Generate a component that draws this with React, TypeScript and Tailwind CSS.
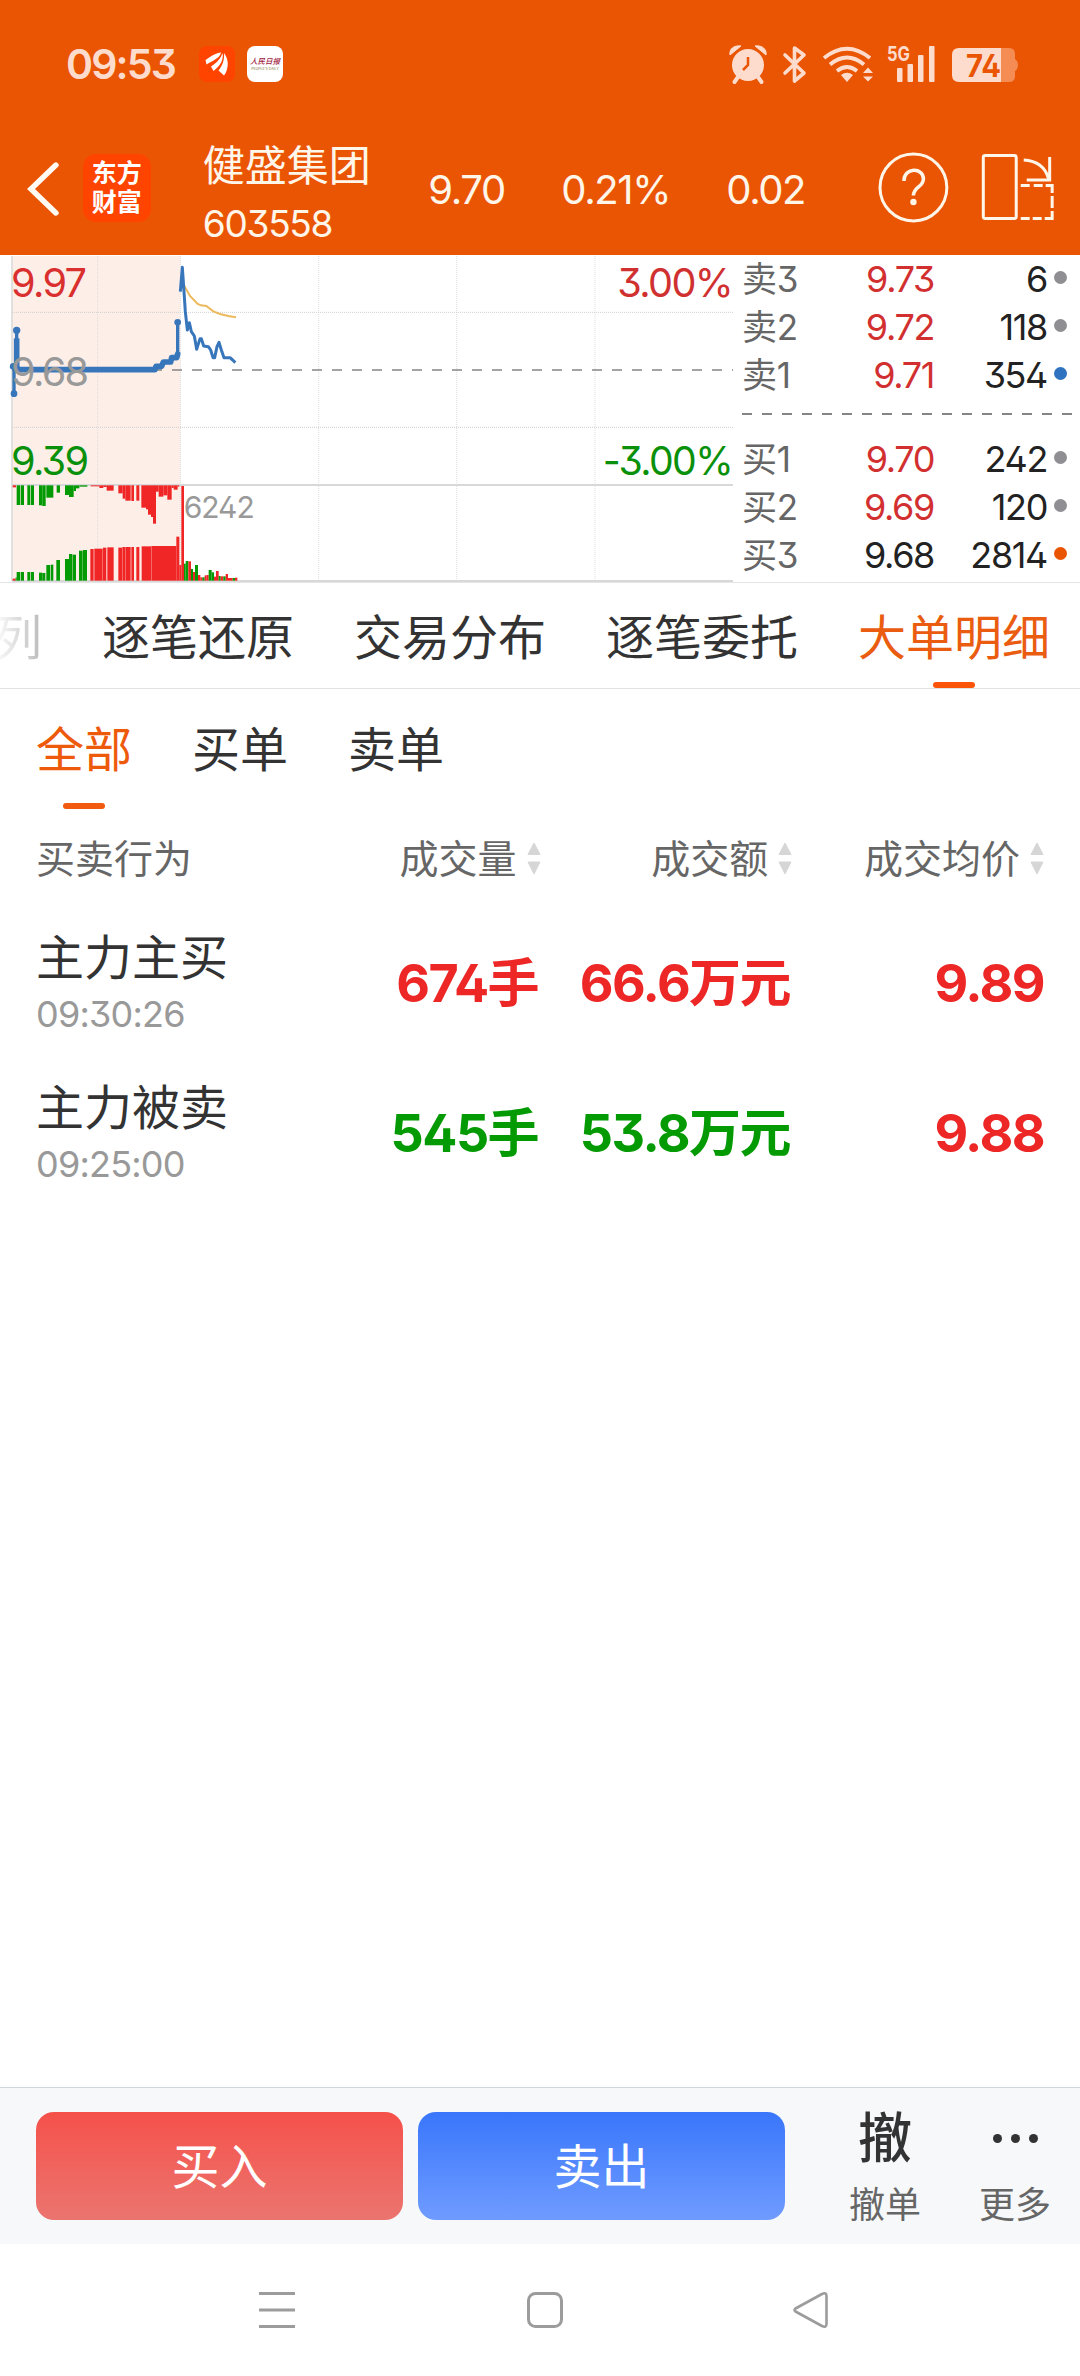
import clsx from "clsx";

type Bar = [x: number, end: number, y: number, color: "r" | "g"];

const RED = "#f02626";
const GREEN = "#049a04";
const BLUE = "#3876bb";

const TABS = ["逐笔还原", "交易分布", "逐笔委托", "大单明细"];
const FILTERS = ["全部", "买单", "卖单"];

const SELLS = [
  { label: "卖3", price: "9.73", volume: "6", dot: "bg-[#8e8e93]" },
  { label: "卖2", price: "9.72", volume: "118", dot: "bg-[#8e8e93]" },
  { label: "卖1", price: "9.71", volume: "354", dot: "bg-[#2e72c0]" },
];

const BUYS = [
  { label: "买1", price: "9.70", volume: "242", dot: "bg-[#8e8e93]" },
  { label: "买2", price: "9.69", volume: "120", dot: "bg-[#8e8e93]" },
  { label: "买3", price: "9.68", volume: "2814", dot: "bg-[#ea5504]" },
];

const ORDERS = [
  { name: "主力主买", time: "09:30:26", volume: "674手", amount: "66.6万元", price: "9.89", up: true },
  { name: "主力被卖", time: "09:25:00", volume: "545手", amount: "53.8万元", price: "9.88", up: false },
];

// unmatched auction volume, hangs from the top of the volume pane
const HANGING: Bar[] = [
  [38, 48, 712, "r"], [50, 60, 765, "g"], [62, 72, 765, "g"], [82, 91, 765, "g"], [93, 102, 765, "g"],
  [117, 127, 766, "g"], [127, 137, 768, "g"], [139, 160, 743, "g"], [170, 180, 728, "g"], [195, 207, 735, "g"],
  [207, 221, 741, "g"], [221, 228, 723, "g"], [228, 238, 715, "g"], [238, 262, 710, "g"],
  [272, 298, 709, "r"], [298, 310, 714, "r"], [310, 320, 711, "r"], [320, 341, 722, "r"], [355, 368, 730, "r"],
  [368, 376, 746, "r"], [376, 392, 752, "r"], [394, 402, 753, "r"], [409, 418, 752, "r"], [424, 438, 773, "r"],
  [438, 444, 778, "r"], [444, 453, 794, "r"], [453, 459, 801, "r"], [459, 468, 821, "r"], [468, 476, 725, "r"],
  [476, 490, 740, "r"], [490, 502, 736, "r"], [502, 515, 749, "r"], [515, 521, 714, "r"], [521, 533, 719, "r"],
  [533, 538, 710, "r"],
];

const RISING: Bar[] = [
  [38, 47, 986, "r"], [47, 50, 982, "g"], [50, 60, 966, "g"], [62, 72, 966, "g"], [82, 91, 966, "g"],
  [93, 102, 966, "g"], [117, 127, 968, "g"], [127, 136, 969, "g"], [139, 150, 945, "g"], [152, 160, 944, "g"],
  [169, 180, 930, "g"], [195, 207, 927, "g"], [207, 217, 912, "g"], [218, 228, 914, "g"], [237, 248, 902, "g"],
  [249, 261, 900, "g"], [271, 281, 897, "r"], [283, 308, 896, "r"], [309, 319, 893, "r"], [322, 341, 892, "r"],
  [355, 366, 893, "r"], [367, 377, 891, "r"], [378, 392, 891, "r"], [394, 402, 891, "r"], [409, 418, 891, "r"],
  [425, 453, 889, "r"], [454, 529, 888, "r"], [529, 538, 860, "r"], [538, 544, 945, "r"], [544, 552, 708, "r"],
  [552, 557, 941, "g"], [557, 565, 933, "g"], [565, 573, 934, "r"], [573, 579, 957, "g"], [579, 585, 966, "r"],
  [585, 594, 945, "g"], [594, 601, 975, "r"], [601, 607, 982, "r"], [607, 614, 982, "g"], [614, 620, 976, "r"],
  [620, 626, 975, "r"], [626, 635, 960, "g"], [635, 642, 967, "g"], [642, 648, 980, "r"], [648, 656, 963, "r"],
  [656, 662, 978, "g"], [662, 670, 979, "r"], [670, 677, 979, "g"], [677, 684, 972, "r"], [684, 698, 984, "r"],
  [698, 705, 984, "g"], [705, 712, 983, "r"],
];

function StatusIcons() {
  return (
    <svg viewBox="724 40 300 48" className="h-12 w-[300px]" fill="#fddccd" stroke="#fddccd" strokeWidth="0">
      <circle cx="748" cy="65" r="16" />
      <path d="M730 55C729 49 734 45 741 46ZM766 55C767 49 762 45 755 46Z" strokeWidth="1" strokeLinejoin="round" />
      <path d="M738 77l-3.500 5M758 77l3.500 5" strokeWidth="4" strokeLinecap="round" />
      <path d="M748 57v8l-5 5" fill="none" stroke="#ea5504" strokeWidth="2.500" />
      <path d="M785 55l19 18-9.500 8V48l9.500 7-19 18" fill="none" strokeWidth="3.600" strokeLinecap="round" strokeLinejoin="round" />
      <g fill="none" strokeWidth="3.800">
        <path d="M824 58q23-18.500 46 0" />
        <path d="M830 64.500q17-14 34 0" />
        <path d="M837 71q10-8 20 0" />
      </g>
      <path d="M841 75q6-4.500 12 0l-6 7zM868 67.500l5 5.500h-10zM868 81.500l5-5h-10z" />
      <text x="887" y="61" fontSize="20" fontWeight="700" textLength="23" lengthAdjust="spacingAndGlyphs">5G</text>
      <rect x="897" y="68" width="5.500" height="14" rx="1" />
      <rect x="907.500" y="64" width="5.500" height="18" rx="1" />
      <rect x="918" y="55" width="5.500" height="27" rx="1" />
      <rect x="929" y="46" width="5.500" height="36" rx="1" />
      <path d="M1001 48h8q6 0 6 6v5q3 2 3 6t-3 6v5q0 6-6 6h-8z" fill="#f48c54" />
      <path d="M959 48h42v34h-42q-7 0-7-7v-20q0-7 7-7z" />
      <text x="966" y="77" fontSize="31" fontWeight="700" fill="#ea5504" textLength="35" lengthAdjust="spacingAndGlyphs">74</text>
    </svg>
  );
}

function Header() {
  return (
    <header className="h-[255px] bg-[#ea5504] text-[#fff6ea]">
      <div className="flex h-32 items-center pl-[65px] pr-14">
        <span className="w-[134px] pl-px text-[41px] font-semibold leading-none tracking-[-0.045em] text-[#fddccd]">09:53</span>
        <svg viewBox="0 0 36 36" className="mr-3 size-9">
          <rect width="36" height="36" rx="8" fill="#ff4400" />
          <path
            d="M6.500 14C13 9.500 17 7 22 6.500C21 12 14 14.500 7.500 18.500ZM12 20.500C18 17 22 12 23.500 7C25 14 21 20 14.500 25ZM19.500 24.500C24 19 25.500 13 25 7C30 13 30 23 25 29.500Z"
            fill="#fff"
          />
        </svg>
        <div className="flex size-9 flex-col items-center justify-center rounded-lg bg-white leading-none">
          <span className="text-[7.500px] font-medium italic leading-[11px] text-[#a02040]">人民日报</span>
          <span className="text-[3.500px] leading-[5px] text-[#8a7a50]">PEOPLE'S DAILY</span>
        </div>
        <div className="ml-auto">
          <StatusIcons />
        </div>
      </div>

      <div className="flex h-[127px] items-center pl-[25px] pr-6">
        <svg viewBox="0 0 36 58" className="mt-[-6px] h-[58px] w-9" fill="none" stroke="#fffaf2" strokeWidth="5.500" strokeLinecap="round">
          <path d="M31 5L6 29L31 53" />
        </svg>
        <div className="ml-[22px] mt-[-7px] flex size-[68px] flex-col items-center justify-center rounded-[13px] bg-[#ff4400] text-[25px] font-bold leading-[29px] text-white">
          <span>东方</span>
          <span>财富</span>
        </div>
        <div className="ml-[52px] mt-1.5 w-[226px]">
          <div className="text-[42px] leading-[58px]">健盛集团</div>
          <div className="text-[37px] leading-[58px] tracking-[-0.035em]">603558</div>
        </div>
        <div className="mt-[-4px] flex text-[40px] tracking-[-0.035em]">
          <span className="w-[133px]">9.70</span>
          <span className="w-[165px]">0.21%</span>
          <span className="w-[152px]">0.02</span>
        </div>
        <svg viewBox="878 152 178 72" className="mt-[-7px] h-[72px] w-[178px]" fill="none" stroke="#fff6ea" strokeWidth="3">
          <circle cx="913.500" cy="187.500" r="33.500" />
          <path d="M904 181C904 167 923.500 167 923.500 179C923.500 187 913.500 187 913.500 195.500" strokeWidth="3.500" />
          <circle cx="913.500" cy="202" r="1.700" />
          <rect x="983.500" y="155.500" width="33" height="63" rx="2" />
          <path d="M1024 160Q1044 161 1049 179M1050 157V180H1027" />
          <path d="M1021 185.500H1030M1034 185.500H1043M1046 185.500H1052.500V193M1052.500 196V208M1052.500 211V218.500H1045M1042 218.500H1033M1030 218.500H1021" />
        </svg>
      </div>
    </header>
  );
}

function Bars({ data, hanging }: { data: Bar[]; hanging?: boolean }) {
  return (
    <>
      {data.map(([x, end, y, color]) => (
        <rect
          key={x}
          x={x}
          y={hanging ? 706 : y}
          width={end - x}
          height={hanging ? y - 706 : 992 - y}
          fill={color === "r" ? RED : GREEN}
        />
      ))}
    </>
  );
}

function PriceChart() {
  return (
    <svg viewBox="0 15 2202 981" className="h-[327px] w-[734px] shrink-0" fill="none">
      <rect x="36" y="18" width="505" height="975" fill="#fdeee7" />
      <path d="M36 18V993" stroke="#dcdcdc" strokeWidth="5" />
      <path d="M293 18V993M541 18V993M956 18V993M1370 18V993M1785 18V993" stroke="#dedede" strokeWidth="3" strokeDasharray="3 3" />
      <path d="M36 187H2199M36 532H2199" stroke="#cfcfcf" strokeWidth="3" strokeDasharray="3 3" />
      <path d="M36 360H2199" stroke="#858585" strokeWidth="5" strokeDasharray="30 30" />
      <path d="M36 705H2199M36 993H2199" stroke="#d8d8d8" strokeWidth="6" />

      <Bars data={HANGING} hanging />
      <Bars data={RISING} />

      <path d="M553 108L570 138L593 162L603 166L619 168L640 184L660 192L685 198L708 202" stroke="#ecba5c" strokeWidth="6" />
      <g stroke={BLUE} strokeLinejoin="round">
        <path d="M541 125L547 52L551 110L556 185L562 240L568 218L574 245L583 258L590 298L600 266H604L611 288L625 290L632 300L639 323H644L651 290L657 277L664 300L672 323H690L698 330L706 338" strokeWidth="9" />
        <path d="M42 432V350M50 240V350M533 217V312" strokeWidth="10" />
        <path d="M38 350L60 359H465L468 349H485L490 336H512L515 323H530L533 312" strokeWidth="17" strokeLinecap="round" />
        <path d="M50 265V355" strokeWidth="17" />
      </g>
      <g fill={BLUE}>
        <circle cx="40" cy="349" r="10" />
        <circle cx="50" cy="241" r="11" />
        <circle cx="42" cy="431" r="10" />
        <circle cx="533" cy="217" r="10" />
      </g>

      <g fontSize="119" letterSpacing="-5">
        <text x="33" y="140" fill="#d92f2f">9.97</text>
        <text x="33" y="407" fill="#999">9.68</text>
        <text x="33" y="674" fill="#0a900a">9.39</text>
        <text x="2196" y="140" fill="#d03030" textAnchor="end" textLength="344" lengthAdjust="spacingAndGlyphs">3.00%</text>
        <text x="2196" y="674" fill="#0a900a" textAnchor="end" textLength="388" lengthAdjust="spacingAndGlyphs">-3.00%</text>
      </g>
      <text x="551" y="805" fontSize="90" letterSpacing="-3" fill="#999">6242</text>
    </svg>
  );
}

function BookRows({ rows }: { rows: typeof SELLS }) {
  return (
    <>
      {rows.map((row) => (
        <div key={row.label} className="flex h-12 items-center text-[36px] leading-none tracking-[-0.038em] text-[#222]">
          <span className="w-[80px] text-[35px] tracking-[-0.01em] text-[#666]">{row.label}</span>
          <span className={clsx("w-[112px] text-right", row.price !== "9.68" && "text-[#d23030]")}>{row.price}</span>
          <span className="w-[113px] text-right">{row.volume}</span>
          <span className={clsx("mb-1 ml-[7px] size-[13px] rounded-full", row.dot)} />
        </div>
      ))}
    </>
  );
}

function SortIcon() {
  return (
    <svg viewBox="0 0 14 32" className="ml-2.5 h-8 w-3.5" fill="#d6d6d6">
      <path d="M7 1l6 11.500H1zM7 32l6-12H1z" stroke="#d6d6d6" strokeLinejoin="round" />
    </svg>
  );
}

function OrderTable() {
  return (
    <section className="grow px-9">
      <div className="flex h-24 items-center text-[39px] leading-none text-[#666]">
        <span className="w-[271px]">买卖行为</span>
        <span className="flex w-[234px] items-center justify-end">成交量<SortIcon /></span>
        <span className="flex w-[252px] items-center justify-end">成交额<SortIcon /></span>
        <span className="flex w-[252px] items-center justify-end">成交均价<SortIcon /></span>
      </div>
      {ORDERS.map((order) => (
        <div key={order.time} className="flex h-[150px] items-center pt-1.5">
          <div className="w-[271px]">
            <div className="text-[48px] leading-[60px] text-[#333]">{order.name}</div>
            <div className="text-[36px] leading-[52px] tracking-[-0.022em] text-[#999]">{order.time}</div>
          </div>
          <div
            className={clsx(
              "flex text-right text-[52px] font-bold leading-none tracking-[-0.03em]",
              order.up ? "text-[#ed2626]" : "text-[#049a04]",
            )}
          >
            <span className="w-[231px]">{order.volume}</span>
            <span className="w-[252px]">{order.amount}</span>
            <span className="w-[254px] text-[#ed2626]">{order.price}</span>
          </div>
        </div>
      ))}
    </section>
  );
}

function TradeBar() {
  return (
    <footer className="flex h-[157px] items-center border-t border-[#cfd6dd] bg-[#f6f8fa] pl-9">
      <button className="h-[108px] w-[367px] rounded-[18px] bg-linear-to-b from-[#f5504a] to-[#eb746f] pt-0.5 text-[48px] text-white">买入</button>
      <button className="ml-[15px] h-[108px] w-[367px] rounded-[18px] bg-linear-to-b from-[#3976fb] to-[#6f9bff] pt-0.5 text-[48px] text-white">卖出</button>
      <div className="ml-[35px] flex w-[130px] flex-col items-center pt-3.5">
        <span className="text-[54px] font-medium leading-[64px] text-[#333]">撤</span>
        <span className="text-[36px] leading-[68px] text-[#666]">撤单</span>
      </div>
      <div className="flex w-[130px] flex-col items-center pt-3">
        <span className="flex h-[65px] items-center gap-[9px]">
          {[0, 1, 2].map((i) => (
            <i key={i} className="size-[9px] rounded-full bg-[#333]" />
          ))}
        </span>
        <span className="text-[36px] leading-[68px] text-[#666]">更多</span>
      </div>
    </footer>
  );
}

function SystemNav() {
  return (
    <nav className="flex h-[132px] items-center pl-[258px] text-[#9c9c9c]">
      <svg viewBox="0 0 38 38" className="size-[38px]" stroke="currentColor" strokeWidth="3">
        <path d="M1 2.500H37M1 19H37M1 35.500H37" />
      </svg>
      <svg viewBox="0 0 38 38" className="ml-[230px] size-[38px]" fill="none" stroke="currentColor" strokeWidth="3">
        <rect x="2.500" y="2.500" width="33" height="33" rx="7" />
      </svg>
      <svg viewBox="0 0 38 38" className="ml-[228px] size-[38px]" fill="none" stroke="currentColor" strokeWidth="2.600" strokeLinejoin="round">
        <path d="M3.500 17.500L30 3Q34.500 1 34.500 5V33Q34.500 37 30 35L3.500 20.500Q1.500 19 3.500 17.500Z" />
      </svg>
    </nav>
  );
}

export default function App() {
  return (
    <div className="flex h-[2376px] w-[1080px] flex-col overflow-hidden bg-white font-[Inter,'Noto_Sans_CJK_SC',sans-serif] [font-feature-settings:'cv02','cv09']">
      <Header />

      <div className="flex h-[328px] border-b border-[#e4e4e4]">
        <PriceChart />
        <div className="ml-2 w-[338px]">
          <BookRows rows={SELLS} />
          <svg viewBox="0 0 330 36" className="h-9 w-[330px]">
            <path d="M0 15H330" stroke="#858585" strokeWidth="2" strokeDasharray="10 10" />
          </svg>
          <BookRows rows={BUYS} />
        </div>
      </div>

      <nav className="flex h-[106px] shrink-0 gap-[60px] border-b border-[#e2e2e2] text-[48px] leading-[109px] text-[#333]">
        <span className="-ml-1.5 w-12 shrink-0 bg-linear-to-r from-white to-[#bbb] bg-clip-text text-transparent">列</span>
        {TABS.map((tab) => {
          const active = tab === "大单明细";
          return (
            <div key={tab} className={clsx("relative h-[105px] shrink-0", active && "text-[#ea5c10]")}>
              {tab}
              {active && <span className="absolute bottom-0 left-[75px] h-1.5 w-[42px] rounded-full bg-[#fa5508]" />}
            </div>
          );
        })}
      </nav>

      <nav className="flex h-[121px] shrink-0 gap-[60px] pl-9 text-[48px] leading-[122px] text-[#333]">
        {FILTERS.map((filter, i) => (
          <div key={filter} className={clsx("relative", i === 0 && "text-[#ee5a0c]")}>
            {filter}
            {i === 0 && <span className="absolute bottom-px left-[27px] h-1.5 w-[42px] rounded-full bg-[#f25a10]" />}
          </div>
        ))}
      </nav>

      <OrderTable />
      <TradeBar />
      <SystemNav />
    </div>
  );
}
